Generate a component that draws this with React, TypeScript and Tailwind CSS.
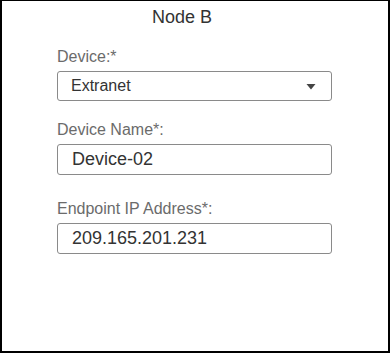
export default function App() {
  const font = { fontFamily: '"Liberation Sans", Arial, sans-serif' };
  return (
    <div
      className="w-[390px] h-[353px] bg-white border-black border-t border-l-2 border-r-2 border-b-2 box-border overflow-hidden"
      style={font}
    >
      <div className="w-[360px] text-center text-[18px] leading-[20px] text-[#333] pt-[6px]">
        Node B
      </div>
      <div className="pl-[55px] pt-[21px] w-[330px] flex flex-col">
        <div className="text-[16px] leading-[18px] text-[#6b6b6b] h-[18px]">Device:*</div>
        <div className="mt-[5px] h-[30px] border border-[#8a8a8a] rounded-[3px] flex items-center pl-[13px] pr-[15px] text-[16px] text-[#333]">
          <span className="flex-1">Extranet</span>
          <svg width="10" height="7" viewBox="0 0 10 7">
            <path d="M0.5 1 L9.5 1 L5 6.5 Z" fill="#444" />
          </svg>
        </div>
        <div className="mt-[20px] text-[16px] leading-[18px] text-[#6b6b6b] h-[18px]">Device Name*:</div>
        <div className="mt-[5px] h-[31px] border border-[#8a8a8a] rounded-[3px] flex items-center pl-[14px] text-[18px] text-[#333]">
          Device-02
        </div>
        <div className="mt-[25px] text-[16px] leading-[18px] text-[#6b6b6b] h-[18px]">Endpoint IP Address*:</div>
        <div className="mt-[5px] h-[31px] border border-[#8a8a8a] rounded-[3px] flex items-center pl-[14px] text-[18px] text-[#333]">
          209.165.201.231
        </div>
      </div>
    </div>
  );
}
